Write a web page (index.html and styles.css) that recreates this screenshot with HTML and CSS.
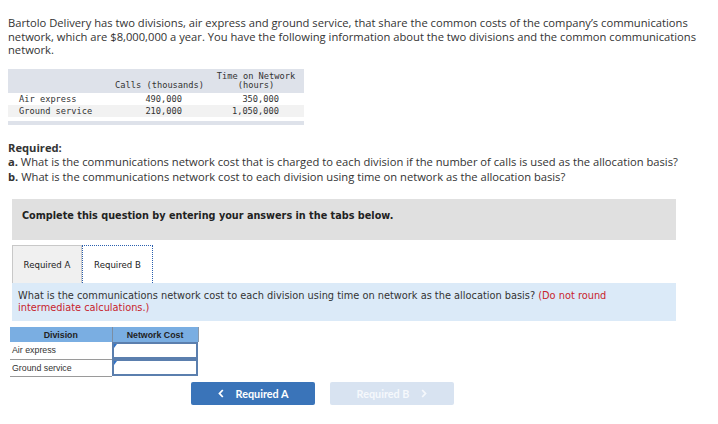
FILE: index.html
```html
<!DOCTYPE html>
<html>
<head>
<meta charset="utf-8">
<link rel="stylesheet" href="styles.css">
</head>
<body>
<div class="page">
  <p class="intro">Bartolo Delivery has two divisions, air express and ground service, that share the common costs of the company’s communications network, which are $8,000,000 a year. You have the following information about the two divisions and the common communications network.</p>

  <table class="data">
    <thead>
      <tr>
        <th class="c1"></th>
        <th class="c2">Calls (thousands)</th>
        <th class="c3">Time on Network<br>(hours)</th>
      </tr>
    </thead>
    <tbody>
      <tr>
        <td class="c1">Air express</td>
        <td class="c2">490,000</td>
        <td class="c3">350,000</td>
      </tr>
      <tr class="alt">
        <td class="c1">Ground service</td>
        <td class="c2">210,000</td>
        <td class="c3">1,050,000</td>
      </tr>
    </tbody>
  </table>
  <div class="data-foot"></div>

  <div class="required">
    <div class="req-title">Required:</div>
    <div><b>a.</b> What is the communications network cost that is charged to each division if the number of calls is used as the allocation basis?</div>
    <div><b>b.</b> What is the communications network cost to each division using time on network as the allocation basis?</div>
  </div>

  <div class="instructions">Complete this question by entering your answers in the tabs below.</div>

  <div class="tabs">
    <div class="tab">Required A</div>
    <div class="tab active">Required B</div>
  </div>

  <div class="qbox">What is the communications network cost to each division using time on network as the allocation basis? <span class="red">(Do not round</span> <span class="red">intermediate calculations.)</span></div>

  <table class="answer">
    <thead>
      <tr><th class="a1">Division</th><th class="a2">Network Cost</th></tr>
    </thead>
    <tbody>
      <tr><td class="a1">Air express</td><td class="a2"><div class="input"></div></td></tr>
      <tr><td class="a1">Ground service</td><td class="a2"><div class="input"></div></td></tr>
    </tbody>
  </table>

  <div class="nav">
    <div class="btn prev"><svg class="chev" width="6" height="9" viewBox="0 0 6 9"><path d="M4.8 1 L1.5 4.5 L4.8 8" fill="none" stroke="currentColor" stroke-width="1.8"/></svg>Required A</div>
    <div class="btn next">Required B<svg class="chev" width="6" height="9" viewBox="0 0 6 9"><path d="M1.2 1 L4.5 4.5 L1.2 8" fill="none" stroke="currentColor" stroke-width="1.8"/></svg></div>
  </div>
</div>
</body>
</html>
```

FILE: styles.css
```css
* { box-sizing: border-box; }
html, body { margin: 0; padding: 0; background: #fff; }
body { font-family: "Open Sans", "Lato", sans-serif; color: #333; }

.page { padding: 16px 8px 0 8px; width: 718px; }

.intro {
  margin: 0;
  font-size: 11.2px;
  line-height: 13.5px;
  color: #333;
  width: 702px;
}

.data {
  margin-top: 12px;
  border-collapse: collapse;
  font-family: "DejaVu Sans Mono", "Liberation Mono", monospace;
  font-size: 8.7px;
  color: #333;
  width: 296px;
}
.data th { font-weight: normal; background: #dee2ea; vertical-align: bottom; line-height: 9.6px; padding: 3px 0 2px; }
.data td { line-height: 12px; padding: 0; height: 12px; }
.data .c1 { width: 102px; text-align: left; padding-left: 11px; }
.data th.c2 { width: 98px; text-align: right; padding-right: 4px; }
.data th.c3 { width: 96px; text-align: center; }
.data td.c2 { text-align: right; padding-right: 26px; }
.data td.c3 { text-align: right; padding-right: 25px; }
.data tr.alt td { background: #f2f2f2; }
.data-foot { width: 296px; height: 4px; background: #dee2ea; margin-top: 4px; }

.required {
  margin-top: 16px;
  font-size: 11.2px;
  line-height: 14.5px;
  color: #333;
}
.req-title { font-weight: bold; }
.required b { font-weight: bold; }

.instructions {
  margin: 15px 0 0 4px;
  width: 664px;
  height: 41px;
  background: #e0e0e0;
  font-family: "DejaVu Sans", Verdana, sans-serif;
  font-weight: bold;
  font-size: 9.7px;
  color: #222;
  padding: 11px 0 0 10px;
}

.tabs {
  display: flex;
  margin: 5px 0 0 4px;
  height: 38px;
  font-family: "DejaVu Sans", Verdana, sans-serif;
  font-size: 8.6px;
  color: #222;
}
.tab {
  width: 70px;
  height: 38px;
  display: flex;
  align-items: center;
  justify-content: center;
  background: #f0f0f0;
  border: 1px solid #c8c8c8;
  border-bottom: none;
}
.tab.active {
  width: 71px;
  background: #fff;
  border: 1px dotted #2a5fae;
  border-bottom: none;
}

.qbox {
  margin-left: 4px;
  width: 664px;
  background: #dbeaf8;
  font-family: "DejaVu Sans", Verdana, sans-serif;
  font-size: 9.8px;
  line-height: 12px;
  color: #333;
  padding: 7px 10px 7px 6px;
}
.red { color: #c8232c; }

.answer {
  margin: 6px 0 0 2px;
  border-collapse: collapse;
  font-family: "Liberation Sans", Arial, sans-serif;
  font-size: 8.8px;
  color: #333;
}
.answer th {
  background: #7aaee2;
  font-weight: bold;
  height: 15px;
  padding: 0;
  border-right: 1px solid #8a9aac;
  color: #222;
}
.answer th.a1 { width: 102px; border-right: 1px solid #7b8ea4; }
.answer th.a2 { width: 86px; }
.answer td { height: 17px; padding: 0; border-bottom: 1px solid #9a9a9a; }
.answer td.a1 { padding-left: 2px; }
.answer td.a2 { padding: 0; border-bottom: none; }
.input {
  position: relative;
  height: 17px;
  border: 2px solid #5b7fae;
  background: #fff;
}
.input::before {
  content: "";
  position: absolute;
  left: 0; top: 0;
  border-top: 4px solid #2f73c9;
  border-right: 3px solid transparent;
  border-bottom: 1px solid transparent;
}

.nav {
  display: flex;
  gap: 15px;
  margin: 5px 0 0 183px;
}
.btn {
  width: 124px;
  height: 23px;
  border-radius: 2px;
  display: flex;
  align-items: center;
  justify-content: center;
  font-family: "Lato", sans-serif;
  font-weight: bold;
  font-size: 10.8px;
  color: #fff;
}
.btn.prev { background: #3a74b9; }
.btn.next { background: #d8e3f1; color: #f5f8fc; }
.btn.prev .chev { margin-right: 12px; }
.btn.next .chev { margin-left: 12px; }
```
